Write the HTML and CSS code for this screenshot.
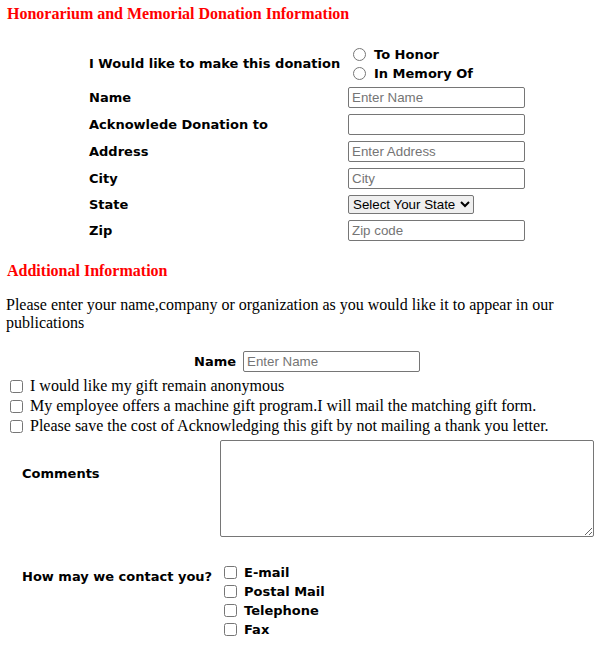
FILE: index.html
```html
<!DOCTYPE html>
<html>
<head>
<meta charset="utf-8">
<link rel="stylesheet" href="styles.css">
</head>
<body>
<h2 class="sec-title first">Honorarium and Memorial Donation Information</h2>
<div class="grid-main">
  <div class="lbl">I Would like to make this donation</div>
  <div class="radios">
    <label class="radio-row"><input type="radio" name="kind"><span>To Honor</span></label>
    <label class="radio-row"><input type="radio" name="kind"><span>In Memory Of</span></label>
  </div>
  <div class="lbl">Name</div>
  <div class="ctl"><input class="txt" type="text" placeholder="Enter Name"></div>
  <div class="lbl">Acknowlede Donation to</div>
  <div class="ctl"><input class="txt" type="text"></div>
  <div class="lbl">Address</div>
  <div class="ctl"><input class="txt" type="text" placeholder="Enter Address"></div>
  <div class="lbl">City</div>
  <div class="ctl"><input class="txt" type="text" placeholder="City"></div>
  <div class="lbl">State</div>
  <div class="ctl"><select class="sel"><option>Select Your State</option></select></div>
  <div class="lbl">Zip</div>
  <div class="ctl"><input class="txt" type="text" placeholder="Zip code"></div>
</div>
<h2 class="sec-title second">Additional Information</h2>
<p class="intro">Please enter your name,company or organization as you would like it to appear in our publications</p>
<div class="name-row">
  <span class="lbl">Name</span>
  <input class="txt" type="text" placeholder="Enter Name">
</div>
<div class="checks">
  <label class="chk-row"><input type="checkbox"><span>I would like my gift remain anonymous</span></label>
  <label class="chk-row"><input type="checkbox"><span>My employee offers a machine gift program.I will mail the matching gift form.</span></label>
  <label class="chk-row"><input type="checkbox"><span>Please save the cost of Acknowledging this gift by not mailing a thank you letter.</span></label>
</div>
<div class="comments-row">
  <div class="lbl comments-lbl">Comments</div>
  <textarea class="comments"></textarea>
</div>
<div class="contact-row">
  <div class="lbl contact-lbl">How may we contact you?</div>
  <div class="contact-opts">
    <label class="opt-row"><input type="checkbox"><span>E-mail</span></label>
    <label class="opt-row"><input type="checkbox"><span>Postal Mail</span></label>
    <label class="opt-row"><input type="checkbox"><span>Telephone</span></label>
    <label class="opt-row"><input type="checkbox"><span>Fax</span></label>
  </div>
</div>
</body>
</html>
```
FILE: styles.css
```css
html, body {
  margin: 0;
  padding: 0;
  background: #fff;
}
body {
  font-family: "Liberation Serif", "Times New Roman", serif;
  font-size: 16px;
  color: #000;
}
.sec-title {
  font-family: "Liberation Serif", "Times New Roman", serif;
  font-weight: bold;
  font-size: 16px;
  color: #ff0000;
  margin: 0;
  padding-left: 7px;
  line-height: 18px;
}
.sec-title.first {
  padding-top: 5px;
}
.sec-title.second {
  margin-top: 18px;
}
.lbl {
  font-family: "DejaVu Sans", Verdana, sans-serif;
  font-weight: bold;
  font-size: 13px;
  color: #000;
}
.grid-main {
  display: grid;
  grid-template-columns: 259px 1fr;
  grid-template-rows: 41px 27px 27px 27px 27px 25px 27px;
  padding-left: 89px;
  margin-top: 20px;
  align-items: center;
}
.radios {
  display: flex;
  flex-direction: column;
  justify-content: center;
}
.radio-row {
  display: flex;
  align-items: center;
  height: 19px;
  font-family: "DejaVu Sans", Verdana, sans-serif;
  font-weight: bold;
  font-size: 13px;
}
.radio-row input {
  margin: 0 8px 0 5px;
  width: 13px;
  height: 13px;
}
.ctl {
  display: flex;
  align-items: center;
}
.txt {
  box-sizing: border-box;
  width: 177px;
  height: 21px;
  border: 1px solid #767676;
  border-radius: 2px;
  padding: 1px 3px;
  font-family: "Liberation Sans", Arial, sans-serif;
  font-size: 13.33px;
  margin: 0;
}
.txt::placeholder {
  color: #757575;
}
.sel {
  box-sizing: border-box;
  height: 19px;
  width: 126px;
  font-family: "Liberation Sans", Arial, sans-serif;
  font-size: 13.33px;
  margin: 0;
  border: 1px solid #767676;
  border-radius: 2px;
}
.intro {
  margin: 16px 0 0 6px;
  width: 560px;
  line-height: 18px;
}
.name-row {
  display: flex;
  align-items: center;
  gap: 7px;
  padding-left: 194px;
  margin-top: 19px;
}
.checks {
  display: flex;
  flex-direction: column;
  margin-top: 4px;
  padding-left: 10px;
}
.chk-row {
  display: flex;
  align-items: center;
  height: 20px;
}
.chk-row input {
  margin: 0 7px 0 0;
  width: 13px;
  height: 13px;
}
.comments-row {
  display: flex;
  align-items: flex-start;
  padding-left: 22px;
  margin-top: 4px;
}
.comments-lbl {
  width: 198px;
  margin-top: 26px;
}
.comments {
  box-sizing: border-box;
  width: 374px;
  height: 97px;
  border: 1px solid #767676;
  border-radius: 2px;
  margin: 0;
}
.contact-row {
  display: flex;
  align-items: flex-start;
  padding-left: 22px;
  margin-top: 26px;
}
.contact-lbl {
  width: 202px;
  margin-top: 6px;
}
.contact-opts {
  display: flex;
  flex-direction: column;
}
.opt-row {
  display: flex;
  align-items: center;
  height: 19px;
  font-family: "DejaVu Sans", Verdana, sans-serif;
  font-weight: bold;
  font-size: 13px;
}
.opt-row input {
  margin: 0 7px 0 0;
  width: 13px;
  height: 13px;
}
```
